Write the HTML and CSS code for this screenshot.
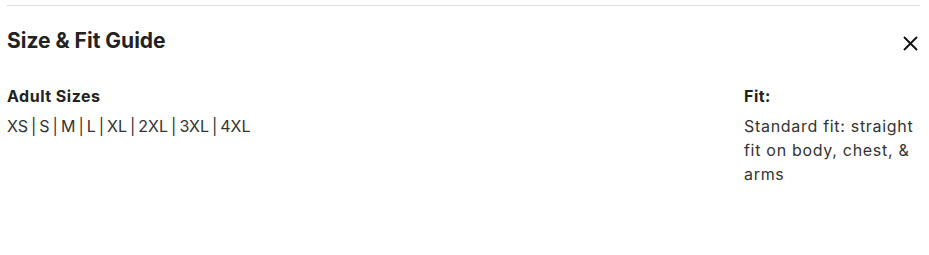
FILE: index.html
```html
<!DOCTYPE html>
<html lang="en">
<head>
  <meta charset="UTF-8" />
  <title>Size &amp; Fit Guide</title>
  <link rel="stylesheet" href="styles.css">
</head>
<body>
  <div class="guide">
    <div class="guide-header">
      <h2 class="guide-title">Size &amp; Fit Guide</h2>
      <button class="close-btn" aria-label="Close">
        <svg width="15" height="15" viewBox="0 0 15 15">
          <path d="M1 1 L14 14 M14 1 L1 14" stroke="#111" stroke-width="1.9" fill="none"/>
        </svg>
      </button>
    </div>
    <div class="guide-body">
      <div class="guide-col">
        <h3 class="col-title">Adult Sizes</h3>
        <p class="col-text sizes">XS | S | M | L | XL | 2XL | 3XL | 4XL</p>
      </div>
      <div class="guide-col fit-col">
        <h3 class="col-title">Fit:</h3>
        <p class="col-text">Standard fit: straight fit on body, chest, &amp; arms</p>
      </div>
    </div>
  </div>
</body>
</html>
```

FILE: styles.css
```css
body {
  margin: 0;
  background: #fff;
  font-family: Inter, "Noto Sans", sans-serif;
  color: #222;
}
.guide {
  margin: 5px 9px 0 7px;
  border-top: 1px solid #ddd;
}
.guide-header {
  display: flex;
  justify-content: space-between;
  align-items: flex-start;
  padding-top: 21px;
}
.guide-title {
  margin: 0;
  font-size: 21px;
  font-weight: 700;
  line-height: 28px;
  color: #222;
}
.close-btn {
  background: none;
  border: none;
  padding: 0;
  margin: 9px 2px 0 0;
  cursor: pointer;
  display: flex;
}
.guide-body {
  display: grid;
  grid-template-columns: 1fr 176px;
  padding-top: 29px;
}
.col-title {
  margin: 0;
  font-size: 16px;
  font-weight: 700;
  line-height: 24px;
  letter-spacing: 0.5px;
}
.col-text {
  margin: 6px 0 0;
  font-size: 16px;
  line-height: 24px;
  letter-spacing: 0.7px;
  color: #333;
}
.sizes {
  letter-spacing: 0;
  word-spacing: -1.5px;
}
```
